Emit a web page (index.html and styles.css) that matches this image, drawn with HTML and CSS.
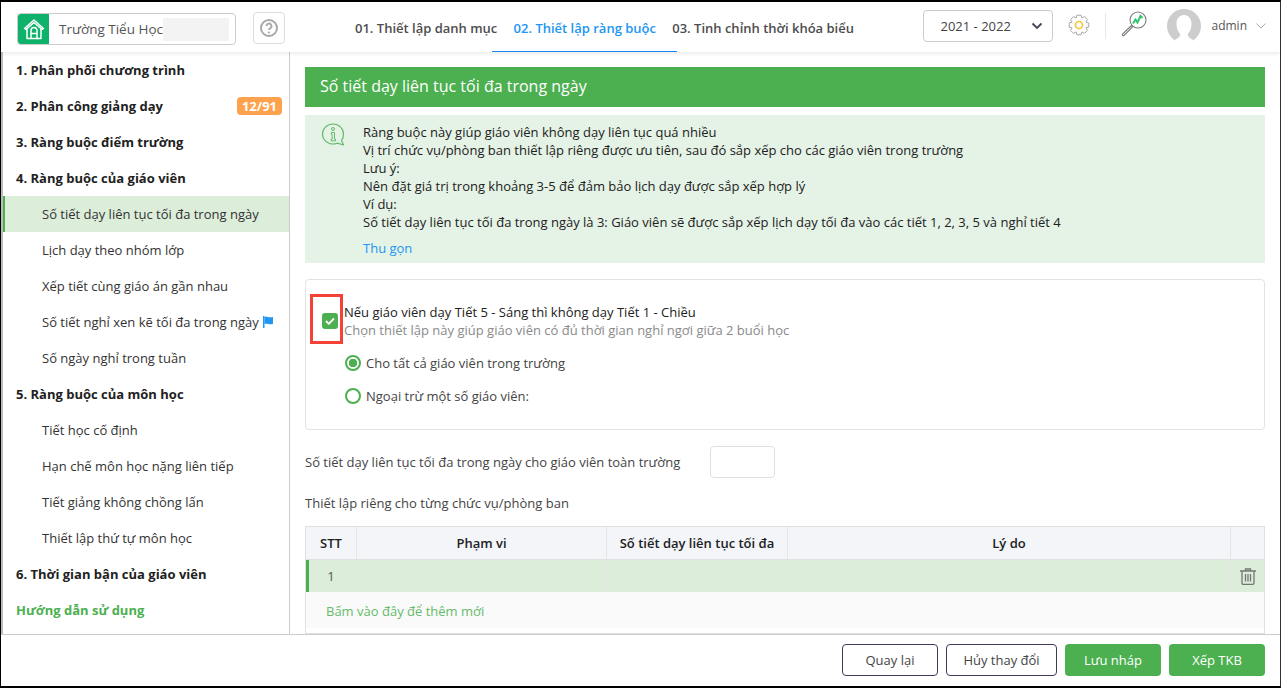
FILE: index.html
```html
<!DOCTYPE html>
<html lang="vi">
<head>
<meta charset="utf-8">
<title>Thiết lập ràng buộc</title>
<link rel="stylesheet" href="styles.css">
</head>
<body>
<div class="app">
  <header class="topbar">
    <div class="school">
      <span class="school-icon">
        <svg width="22" height="22" viewBox="0 0 22 22" fill="none" stroke="#fff" stroke-width="1.5" stroke-linejoin="round" stroke-linecap="round"><path d="M1.500 10.500 11 2l9.500 8.500-1.500 1L11 4.500 3 11.500z"/><path d="M4 11v9.500h14V11"/><path d="M8 20.500V12.500a3 3 0 0 1 6 0v8M8 15.500h6"/></svg>
      </span>
      <span class="school-name">Trường Tiểu Học</span>
      <span class="blur"></span>
    </div>
    <button class="help" type="button">
      <svg width="20" height="20" viewBox="0 0 20 20" fill="none"><circle cx="10" cy="10" r="8" stroke="#a8a8a8" stroke-width="2"/><path d="M7.500 8a2.500 2.500 0 1 1 3.700 2.200c-.8.400-1.200.9-1.200 1.800" stroke="#a8a8a8" stroke-width="1.800"/><circle cx="10" cy="14.500" r="1.100" fill="#a8a8a8"/></svg>
    </button>
    <nav class="steps">
      <a class="step">01. Thiết lập danh mục</a>
      <a class="step active">02. Thiết lập ràng buộc</a>
      <a class="step">03. Tinh chỉnh thời khóa biểu</a>
    </nav>
    <div class="top-right">
      <div class="year">
        <span>2021 - 2022</span>
        <svg width="12" height="8" viewBox="0 0 12 8" fill="none"><path d="M1.500 1.500 6 6l4.500-4.500" stroke="#44465a" stroke-width="1.800"/></svg>
      </div>
      <svg class="gear" width="22" height="22" viewBox="-11 -11 22 22" fill="none"><polygon points="-2.08,-9.78 2.08,-9.78 2.87,-6.93 5.45,-8.39 8.39,-5.45 6.93,-2.87 9.78,-2.08 9.78,2.08 6.93,2.87 8.39,5.45 5.45,8.39 2.87,6.93 2.08,9.78 -2.08,9.78 -2.87,6.93 -5.45,8.39 -8.39,5.45 -6.93,2.87 -9.78,2.08 -9.78,-2.08 -6.93,-2.87 -8.39,-5.45 -5.45,-8.39 -2.87,-6.93" stroke="#a8a8a8" stroke-width="1" stroke-linejoin="round"/><circle r="3.500" stroke="#f3c737" stroke-width="1.700"/></svg>
      <span class="divider"></span>
      <svg class="search" width="26" height="26" viewBox="0 0 26 26" fill="none"><circle cx="17" cy="9" r="8" stroke="#7b7b7b" stroke-width="1.100"/><path d="M12 12.500l2.500-4 2 3 3-6.500 2 2" stroke="#2fc66f" stroke-width="2"/><path d="M10.500 14.500 1.500 23a1.100 1.100 0 0 0 1.500 1.500l8.500-8.500z" stroke="#7b7b7b" stroke-width="1.100"/></svg>
      <svg class="avatar" width="34" height="34" viewBox="0 0 34 34"><circle cx="17" cy="17" r="17" fill="#cdcdcd"/><path d="M17 6c-5 0-7.500 4-7.500 9 0 5 2 8 3.500 10 1 1.500-1 3.500-5 6l2 3h14l2-3c-4-2.500-6-4.500-5-6 1.500-2 3.500-5 3.500-10 0-5-2.500-9-7.500-9z" fill="#fff"/></svg>
      <span class="user">admin</span>
      <svg width="10" height="6" viewBox="0 0 10 6" fill="none"><path d="M.5.500 5 5 9.500.500" stroke="#a9a9a9" stroke-width="1"/></svg>
    </div>
  </header>

  <div class="body">
    <aside class="sidebar">
      <a class="group">1. Phân phối chương trình</a>
      <a class="group">2. Phân công giảng dạy<span class="badge">12/91</span></a>
      <a class="group">3. Ràng buộc điểm trường</a>
      <a class="group">4. Ràng buộc của giáo viên</a>
      <a class="item current">Số tiết dạy liên tục tối đa trong ngày</a>
      <a class="item">Lịch dạy theo nhóm lớp</a>
      <a class="item">Xếp tiết cùng giáo án gần nhau</a>
      <a class="item">Số tiết nghỉ xen kẽ tối đa trong ngày
        <svg class="flag" width="12" height="12" viewBox="0 0 12 12"><path d="M1 0h1.500v12H1z" fill="#2196f3"/><path d="M2.500 1c2.500-1 4 1 8.500 0v7c-4 1-6-1-8.500 0z" fill="#2196f3"/></svg>
      </a>
      <a class="item">Số ngày nghỉ trong tuần</a>
      <a class="group">5. Ràng buộc của môn học</a>
      <a class="item">Tiết học cố định</a>
      <a class="item">Hạn chế môn học nặng liên tiếp</a>
      <a class="item">Tiết giảng không chồng lấn</a>
      <a class="item">Thiết lập thứ tự môn học</a>
      <a class="group">6. Thời gian bận của giáo viên</a>
      <a class="group guide">Hướng dẫn sử dụng</a>
    </aside>

    <main class="content">
      <h1 class="title">Số tiết dạy liên tục tối đa trong ngày</h1>
      <section class="info">
        <svg class="info-icon" width="25" height="23" viewBox="0 0 25 23" fill="none"><path d="M12 1a10.500 10 0 1 0 0 20c1.500 0 3-.3 4.300-.8l6.200 1.800-2-4.500A10 10 0 0 0 22.500 11 10.500 10 0 0 0 12 1z" stroke="#66bb6a" stroke-width="1.200" stroke-linejoin="round"/><circle cx="12" cy="6" r="1.500" stroke="#66bb6a"/><path d="M10.200 9.500h3.300v6.500h1v1.800h-4.300V16h1v-4.700h-1z" stroke="#66bb6a" stroke-linejoin="round"/></svg>
        <div class="info-text">
          <p>Ràng buộc này giúp giáo viên không dạy liên tục quá nhiều</p>
          <p>Vị trí chức vụ/phòng ban thiết lập riêng được ưu tiên, sau đó sắp xếp cho các giáo viên trong trường</p>
          <p>Lưu ý:</p>
          <p>Nên đặt giá trị trong khoảng 3-5 để đảm bảo lịch dạy được sắp xếp hợp lý</p>
          <p>Ví dụ:</p>
          <p>Số tiết dạy liên tục tối đa trong ngày là 3: Giáo viên sẽ được sắp xếp lịch dạy tối đa vào các tiết 1, 2, 3, 5 và nghỉ tiết 4</p>
          <a class="collapse">Thu gọn</a>
        </div>
      </section>

      <section class="panel">
        <div class="check-row">
          <span class="check-frame">
            <span class="check">
              <svg width="10" height="8" viewBox="0 0 10 8" fill="none"><path d="M1 4l2.800 2.800L9 1.500" stroke="#fff" stroke-width="1.800"/></svg>
            </span>
          </span>
          <div class="check-text">
            <div>Nếu giáo viên dạy Tiết 5 - Sáng thì không dạy Tiết 1 - Chiều</div>
            <div class="muted">Chọn thiết lập này giúp giáo viên có đủ thời gian nghỉ ngơi giữa 2 buổi học</div>
          </div>
        </div>
        <div class="radio-row"><span class="radio on"></span>Cho tất cả giáo viên trong trường</div>
        <div class="radio-row"><span class="radio"></span>Ngoại trừ một số giáo viên:</div>
      </section>

      <div class="field-row">
        <label>Số tiết dạy liên tục tối đa trong ngày cho giáo viên toàn trường</label>
        <span class="input"></span>
      </div>
      <div class="sub-title">Thiết lập riêng cho từng chức vụ/phòng ban</div>

      <div class="table">
        <div class="row head">
          <div class="cell">STT</div>
          <div class="cell">Phạm vi</div>
          <div class="cell">Số tiết dạy liên tục tối đa</div>
          <div class="cell">Lý do</div>
          <div class="cell"></div>
        </div>
        <div class="row selected">
          <div class="cell">1</div>
          <div class="cell"></div>
          <div class="cell"></div>
          <div class="cell"></div>
          <div class="cell">
            <svg width="16" height="17" viewBox="0 0 16 17" fill="none" stroke="#757575" stroke-width="1.300"><path d="M0 3h16M5.500 3V1h5v2"/><path d="M2 3.500V15a1.300 1.300 0 0 0 1.300 1.300h9.400A1.300 1.300 0 0 0 14 15V3.500"/><path d="M5.500 6v7.500M8 6v7.500M10.500 6v7.500"/></svg>
          </div>
        </div>
        <div class="add">Bấm vào đây để thêm mới</div>
      </div>
    </main>
  </div>

  <footer class="footer">
    <button class="btn outline" type="button">Quay lại</button>
    <button class="btn outline" type="button">Hủy thay đổi</button>
    <button class="btn primary" type="button">Lưu nháp</button>
    <button class="btn primary" type="button">Xếp TKB</button>
  </footer>
</div>
</body>
</html>
```
FILE: styles.css
```css
* { box-sizing: border-box; }
html, body { margin: 0; height: 100%; }
body { font: 13px/18px "Open Sans", sans-serif; color: #212121; background: #fff; overflow: hidden; }
p, h1 { margin: 0; }

.app { height: 688px; display: flex; flex-direction: column; border: 1px solid #000; border-top-width: 2px; border-bottom-width: 2px; border-right-color: #333; }

.topbar { height: 50px; flex: none; display: flex; align-items: center; padding-left: 16px; background: #fff; box-shadow: 0 2px 4px rgba(0,0,0,.08); position: relative; z-index: 2; }
.school { width: 219px; height: 32px; margin-top: 4px; display: flex; align-items: center; border: 1px solid #ccc; border-radius: 4px; overflow: hidden; }
.school-icon { width: 31px; height: 30px; background: #0fb26b; display: flex; align-items: center; justify-content: center; flex: none; }
.school-name { margin-left: 10px; color: #555; font-size: 13.500px; }
.blur { width: 66px; height: 23px; background: #f3f3f3; }
.help { width: 32px; height: 32px; margin: 2px 0 0 17px; padding: 0; display: flex; align-items: center; justify-content: center; background: #fff; border: 1px solid #ddd; border-radius: 4px; }

.steps { display: flex; margin-left: 70px; height: 50px; gap: 16.250px; }
.step { position: relative; font-weight: 600; color: #4d4d4d; font-size: 13px; line-height: 52px; white-space: nowrap; }
.step.active { color: #2196f3; }
.step.active::after { content: ""; position: absolute; left: -22px; right: -21px; bottom: 0; height: 1px; background: #1e88f5; }

.top-right { margin-left: auto; display: flex; align-items: center; padding: 0 14px 2px 0; }
.year { width: 130px; height: 32px; margin-left: 1px; display: flex; align-items: center; justify-content: space-between; padding: 0 9px 0 16px; border: 1px solid #ccc; border-radius: 4px; color: #444; font-size: 13px; }
.gear { margin: 0 0 2px 15px; }
.divider { width: 1px; height: 26px; background: #e8e8e8; margin-left: 15px; }
.search { margin: 0 0 4px 15px; }
.avatar { margin-left: 20px; flex: none; }
.user { margin: 0 9px 0 10px; color: #555; font-size: 12px; }

.body { flex: 1; min-height: 0; display: flex; }
.sidebar { width: 289px; flex: none; border-left: 2px solid #bdbdbd; border-right: 1px solid #ccc; background: #fff; }
.group, .item { height: 36px; display: flex; align-items: center; white-space: nowrap; }
.group { font-weight: 700; color: #212121; padding: 0 7px 0 13px; justify-content: flex-start; }
.group .badge { margin-left: auto; }
.item { padding-left: 39px; color: #333; }
.item.current { background: #dcedda; border-left: 2px solid #4caf50; padding-left: 37px; }
.flag { margin-left: 3px; }
.badge { width: 45px; height: 18px; border-radius: 4px; background: #ffa24d; color: #fff; font-size: 13px; font-weight: 700; line-height: 18px; text-align: center; }
.guide { color: #4caf50; }

.content { flex: 1; min-width: 0; padding: 15px 15px 0 15px; overflow: hidden; }
.title { height: 40px; padding-left: 15px; background: #4caf50; color: #fff; font-size: 16px; font-weight: 400; line-height: 39px; }
.info { margin-top: 8px; height: 148px; padding: 8px 15px 0 16px; display: flex; background: #e5f2e6; }
.info-icon { flex: none; }
.info-text { margin-left: 17px; }
.collapse { display: block; margin-top: 8px; color: #2196f3; }

.panel { margin-top: 16px; height: 151px; border: 1px solid #e3e3e3; border-radius: 4px; padding: 14px 0 0 4px; }
.check-row { display: flex; align-items: flex-start; }
.check-frame { width: 33px; height: 50px; border: 3px solid #f44336; padding: 4px 0 0 7px; display: flex; align-items: center; justify-content: center; flex: none; }
.check { width: 16px; height: 16px; border-radius: 3px; background: #4caf50; display: flex; align-items: center; justify-content: center; flex: none; }
.check-text { margin: 9px 0 0 1px; }
.muted { color: #8a8a8a; }
.radio-row { height: 33px; margin-left: 35px; display: flex; align-items: center; gap: 5px; color: #444; }
.check-row + .radio-row { margin-top: 2px; }
.radio { width: 16px; height: 16px; border: 2px solid #4caf50; border-radius: 50%; background: #fff; flex: none; }
.radio.on { background: radial-gradient(circle, #4caf50 0 4px, #fff 4.500px); }

.field-row { margin-top: 16px; height: 32px; display: flex; align-items: center; color: #444; }
.input { width: 65px; height: 32px; border: 1px solid #e0e0e0; border-radius: 4px; margin-left: 30px; }
.sub-title { margin-top: 16px; color: #444; }

.table { margin-top: 14px; height: 109px; border: 1px solid #e0e0e0; border-bottom-width: 2px; background: #fff; }
.row { display: grid; grid-template-columns: 51px 250px 181px 443px 1fr; height: 33px; }
.row.head { background: #f3f5f9; font-weight: 600; border-bottom: 1px solid #e0e0e0; }
.cell { display: flex; align-items: center; justify-content: center; border-right: 1px solid #e6e6e6; }
.cell:last-child { border-right: 0; }
.row.selected { height: 32px; background: #dcedda; box-shadow: inset 3px 0 0 #4caf50; color: #555; }
.add { height: 36px; padding: 10px 0 0 20px; color: #66bb6a; background: #fafafa; }

.footer { height: 52px; flex: none; display: flex; justify-content: flex-end; align-items: flex-start; gap: 8px; padding: 9px 15px 0 0; border-top: 1px solid #ccc; background: #fff; }
.btn { height: 32px; font: 13px "Open Sans", sans-serif; border-radius: 4px; cursor: pointer; }
.btn.outline { width: 96px; background: #fff; color: #444; border: 1px solid #3c3c5a; }
.btn.outline + .btn.outline { width: 111px; }
.btn.primary { width: 96px; background: #4caf50; color: #fff; border: 0; }
```
